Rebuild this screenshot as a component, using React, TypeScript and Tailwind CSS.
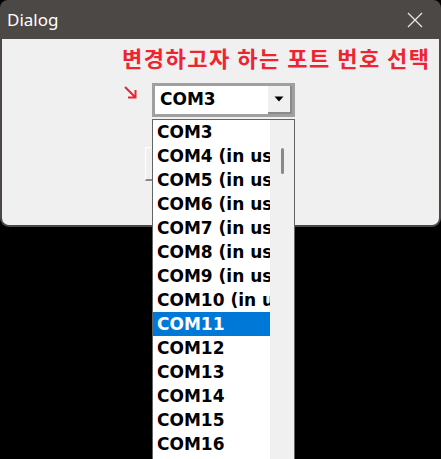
import React from 'react';

const ports = [
  'COM3',
  'COM4 (in use)',
  'COM5 (in use)',
  'COM6 (in use)',
  'COM7 (in use)',
  'COM8 (in use)',
  'COM9 (in use)',
  'COM10 (in use)',
  'COM11',
  'COM12',
  'COM13',
  'COM14',
  'COM15',
  'COM16',
];

const App = () => {
  const selected = 'COM11';

  return (
    <div className="relative h-[459px] w-[441px] overflow-hidden bg-black">
      {/* dialog window */}
      <div className="flex h-[227px] flex-col overflow-hidden rounded-t-lg rounded-b-[9px] bg-[#4b4845]">
        <div className="flex h-[39px] shrink-0 items-center justify-between pl-[7px] pr-[18px]">
          <span className="text-[17px] text-white" style={{ fontFamily: '"Noto Sans", sans-serif' }}>
            Dialog
          </span>
          <svg width="16" height="16" viewBox="0 0 16 16" className="text-[#e6e6e6]">
            <path d="M1 1 L15 15 M15 1 L1 15" stroke="currentColor" strokeWidth="1.3" fill="none" />
          </svg>
        </div>

        <div className="mx-[2px] mb-[2px] flex-1 rounded-b-[7px] bg-[#f0f0f0] pl-[120px] pt-[4px]">
          <p
            className="text-[22px] font-bold leading-[28px] tracking-[1.5px] text-[#ee2430]"
            style={{ fontFamily: '"Noto Sans CJK KR", sans-serif' }}
          >
            변경하고자 하는 포트 번호 선택
          </p>

          <div className="mt-[12px] flex items-start">
            <svg width="16" height="16" viewBox="0 0 16 16" className="ml-[1px] mt-[2px] text-[#ee2430]">
              <path d="M2 2 L12 12 M5 12.5 H12.5 V5" stroke="currentColor" strokeWidth="2" fill="none" />
            </svg>

            {/* combobox */}
            <div className="ml-[13px] flex h-[34px] w-[143px] border border-[#a0a0a0] bg-[#a0a0a0] p-[2px]">
              <div className="flex flex-1 bg-white">
                <span
                  className="flex flex-1 items-center pl-[5px] text-[17px] font-bold text-black"
                  style={{ fontFamily: '"DejaVu Sans", sans-serif' }}
                >
                  COM3
                </span>
                <div className="flex w-[24px] items-center justify-center border-b-2 border-r-2 border-b-[#8a8a8a] border-r-[#8a8a8a] bg-[#f0f0f0]">
                  <svg width="10" height="6" viewBox="0 0 10 6">
                    <path d="M0.5 0.5 H9.5 L5 5.5 Z" fill="#000" />
                  </svg>
                </div>
              </div>
            </div>
          </div>

          {/* button partly hidden under the list */}
          <div className="ml-[23px] mt-[30px] h-[34px] w-[110px] border-b-2 border-l border-r-2 border-t border-b-[#8a8a8a] border-l-white border-r-[#8a8a8a] border-t-white bg-[#f0f0f0]" />
        </div>
      </div>

      {/* dropped list */}
      <div
        className="absolute left-[152px] top-[119px] flex h-[345px] w-[143px] border border-[#646464] bg-white"
        style={{ fontFamily: '"DejaVu Sans", sans-serif' }}
      >
        <ul className="w-[117px] overflow-hidden">
          {ports.map((p) => (
            <li
              key={p}
              className={
                p === selected
                  ? 'h-[24px] whitespace-nowrap bg-[#0078d7] pl-[4px] text-[17px] font-bold leading-[24px] text-white'
                  : 'h-[24px] whitespace-nowrap pl-[4px] text-[17px] font-bold leading-[24px] text-black'
              }
            >
              {p}
            </li>
          ))}
        </ul>
        <div className="flex w-[24px] justify-center bg-[#f0f0f0] pt-[28px]">
          <div className="h-[26px] w-[3px] rounded-full bg-[#8a8a8a]" />
        </div>
      </div>
    </div>
  );
};

export default App;
